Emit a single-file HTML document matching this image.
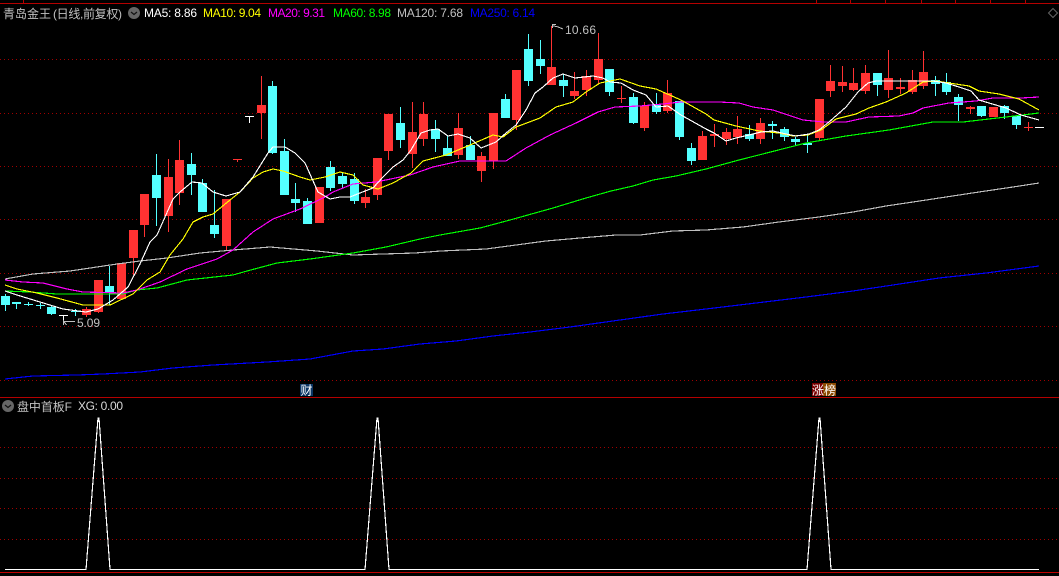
<!DOCTYPE html>
<html><head><meta charset="utf-8"><style>
html,body{margin:0;padding:0;background:#000;width:1059px;height:576px;overflow:hidden}
svg{display:block}
text{font-family:"Liberation Sans","WenQuanYi Zen Hei","Noto Sans CJK SC",sans-serif;font-size:12px}
</style></head><body>
<svg width="1059" height="576" viewBox="0 0 1059 576" xmlns="http://www.w3.org/2000/svg">
<defs><pattern id="d" x="0" y="0" width="4" height="1" patternUnits="userSpaceOnUse"><rect width="1" height="1" fill="#a00000"/></pattern></defs>
<rect width="1059" height="576" fill="#000"/>
<g shape-rendering="crispEdges">
<g fill="#000">
<rect x="0" y="59" width="1059" height="1" fill="#000"/>
</g>
<rect x="0" y="59" width="1059" height="1" fill="url(#d)"/>
<rect x="0" y="113" width="1059" height="1" fill="url(#d)"/>
<rect x="0" y="166" width="1059" height="1" fill="url(#d)"/>
<rect x="0" y="219" width="1059" height="1" fill="url(#d)"/>
<rect x="0" y="273" width="1059" height="1" fill="url(#d)"/>
<rect x="0" y="326" width="1059" height="1" fill="url(#d)"/>
<rect x="0" y="380" width="1059" height="1" fill="url(#d)"/>
<rect x="0" y="447" width="1059" height="1" fill="url(#d)"/>
<rect x="0" y="478" width="1059" height="1" fill="url(#d)"/>
<rect x="0" y="508" width="1059" height="1" fill="url(#d)"/>
<rect x="0" y="539" width="1059" height="1" fill="url(#d)"/>
<rect x="0" y="3" width="1059" height="1" fill="#b40000"/>
<rect x="0" y="397" width="1059" height="1" fill="#b40000"/>
<rect x="0" y="572" width="1059" height="1" fill="#c00000"/>
<path d="M23.5 0V3M816.5 0V3M850.5 0V3M885.5 0V3M921.5 0V3M955.5 0V3M990.5 0V3M1025.5 0V3" stroke="#b40000" fill="none"/>
<path fill="none" stroke="#54ffff" d="M5.5 294V311M16.5 302V309M28.5 302V306M40.5 303V309M51.5 305V315M75.5 309V316M109.5 266V305M156.5 154V226M191.5 153V195M202.5 179V212M214.5 190V238M272.5 81V154M284.5 139V195M295.5 183V212M307.5 198V224M330.5 161V191M342.5 172V188M354.5 173V204M400.5 107V148M435.5 120V152M447.5 136V156M470.5 136V160M505.5 94V118M528.5 34V86M540.5 40V74M563.5 74V97M609.5 69V96M633.5 93V124M656.5 93V114M679.5 101V140M691.5 143V165M749.5 125V141M772.5 121V139M784.5 127V141M795.5 137V146M807.5 135V153M877.5 73V96M935.5 76V96M946.5 73V95M958.5 94V121M981.5 106V117M1004.5 105V119M1016.5 116V129"/>
<path fill="#54ffff" d="M1 296h9V305h-9zM12 302h9V304h-9zM24 304h9V305h-9zM36 305h9V306h-9zM47 307h9V314h-9zM71 311h9V312h-9zM105 286h9V293h-9zM152 175h9V198h-9zM187 164h9V175h-9zM198 183h9V212h-9zM210 225h9V234h-9zM268 86h9V153h-9zM280 151h9V195h-9zM291 199h9V203h-9zM303 201h9V224h-9zM326 167h9V188h-9zM338 176h9V184h-9zM350 179h9V201h-9zM396 123h9V140h-9zM431 129h9V139h-9zM443 148h9V156h-9zM466 145h9V160h-9zM501 99h9V118h-9zM524 49h9V81h-9zM536 59h9V66h-9zM559 80h9V86h-9zM605 69h9V92h-9zM629 97h9V123h-9zM652 104h9V112h-9zM675 101h9V137h-9zM687 148h9V161h-9zM745 134h9V139h-9zM768 124h9V126h-9zM780 129h9V137h-9zM791 139h9V142h-9zM803 143h9V145h-9zM873 73h9V85h-9zM931 80h9V84h-9zM942 82h9V92h-9zM954 97h9V105h-9zM977 106h9V116h-9zM1000 106h9V113h-9zM1012 116h9V125h-9z"/>
<path fill="none" stroke="#ff3232" d="M86.5 307V317M98.5 280V313M121.5 263V299M133.5 230V275M144.5 194V237M168.5 159V232M179.5 140V205M226.5 199V251M237.5 159V162M261.5 76V139M319.5 187V223M365.5 189V208M377.5 158V200M388.5 114V160M412.5 102V168M423.5 102V146M458.5 113V159M481.5 152V182M493.5 113V169M516.5 70V130M551.5 26V85M574.5 72V99M586.5 70V96M598.5 33V84M621.5 86V103M644.5 102V131M667.5 80V113M702.5 131V160M714.5 124V147M726.5 128V145M737.5 116V144M760.5 118V144M819.5 99V141M830.5 65V97M842.5 66V92M853.5 68V91M865.5 65V94M888.5 50V98M900.5 78V94M912.5 70V94M923.5 51V89M970.5 106V114M993.5 107V117M1028.5 122V131"/>
<path fill="#ff3232" d="M82 309h9V315h-9zM94 280h9V312h-9zM117 263h9V299h-9zM129 230h9V258h-9zM140 194h9V225h-9zM164 177h9V216h-9zM175 160h9V193h-9zM222 199h9V246h-9zM233 159h9V160h-9zM257 105h9V113h-9zM315 187h9V223h-9zM361 197h9V203h-9zM373 158h9V195h-9zM384 114h9V151h-9zM408 132h9V154h-9zM419 114h9V139h-9zM454 128h9V155h-9zM477 156h9V171h-9zM489 113h9V161h-9zM512 70h9V120h-9zM547 67h9V85h-9zM570 91h9V96h-9zM582 76h9V90h-9zM594 59h9V80h-9zM617 98h9V99h-9zM640 106h9V128h-9zM663 93h9V111h-9zM698 136h9V160h-9zM710 134h9V136h-9zM722 132h9V139h-9zM733 129h9V137h-9zM756 123h9V139h-9zM815 99h9V138h-9zM826 81h9V91h-9zM838 82h9V86h-9zM849 83h9V90h-9zM861 73h9V91h-9zM884 78h9V90h-9zM896 87h9V89h-9zM908 80h9V92h-9zM919 72h9V86h-9zM966 107h9V109h-9zM989 107h9V117h-9zM1024 127h9V128h-9z"/>
<path fill="#fff" d="M59 315h9v1h-9zM245 116h9v1h-9zM1035 127h9v1h-9z"/>
<path fill="none" stroke="#fff" d="M63.5 315V323M249.5 116V123"/>
</g>
<g fill="none" stroke-width="1.15" shape-rendering="crispEdges">
<polyline stroke="#0000ff" points="5,379 33,376 77,375 103,374 140,372 173,368 213,365 267,362 310,359 353,351 383,349 420,344 456,341 493,336 530,332 570,327 620,320 663,314 706,309 756,303 806,297 853,291 893,285 939,278 986,273 1039,266"/>
<polyline stroke="#c0c0c0" points="5,279 33,274 70,271 117,264 140,261 167,258 200,253 233,250 270,247 317,251 353,255 383,254 415,253 441,251 463,250 486,249 516,245 546,241 580,238 616,235 640,235 673,231 706,230 743,227 779,222 819,217 853,212 886,206 913,202 946,197 979,192 1013,187 1039,183"/>
<polyline stroke="#00ff00" points="5,291 30,292 57,294 123,294 137,290 157,288 187,280 233,275 247,271 277,263 310,259 353,253 386,247 420,239 440,235 480,228 510,220 553,208 586,198 611,191 633,186 653,180 676,176 706,169 739,160 806,143 846,136 889,130 933,122 963,122 1006,117 1039,113"/>
<polyline stroke="#ff00ff" points="5,280 23,282 43,283 67,289 83,292 123,293 137,290 160,282 187,269 217,259 233,250 253,232 273,219 300,209 325,197 333,192 353,184 376,182 410,175 433,167 460,161 480,161 506,161 526,148 550,135 576,123 598,112 615,107 640,106 663,104 680,102 706,102 719,102 739,103 753,107 773,110 803,120 823,122 846,122 869,117 899,116 913,113 923,108 949,103 976,101 993,98 1021,98 1039,97"/>
<polyline stroke="#ffff00" points="5,285 17,289 37,293 57,298 83,305 110,305 133,294 147,280 160,272 170,255 183,239 193,222 203,217 213,214 230,200 240,192 253,178 263,172 273,169 283,171 300,177 310,180 325,177 340,172 353,175 363,185 378,189 393,183 411,173 423,161 446,155 470,145 493,135 503,137 516,127 540,118 556,107 573,102 586,92 600,83 620,79 640,86 656,89 681,100 706,114 714,120 736,126 759,131 779,133 793,136 808,135 821,130 836,119 856,114 869,108 886,102 906,93 923,82 936,81 949,83 969,86 979,91 999,94 1019,99 1039,110"/>
<polyline stroke="#ffffff" points="5,291 17,295 40,302 63,309 86,312 98,309 113,300 128,287 140,264 150,242 157,235 173,199 180,192 192,182 202,183 213,192 226,196 240,192 253,177 268,153 273,147 285,147 295,153 305,163 318,192 330,199 340,197 350,197 360,193 373,188 383,177 393,167 403,160 411,150 421,133 430,130 438,129 448,136 458,134 470,138 481,148 496,142 506,133 516,125 526,110 535,93 543,87 553,78 563,74 575,78 593,76 603,78 610,82 621,83 633,90 646,95 656,107 668,106 681,115 706,129 714,133 726,141 736,138 749,135 761,132 773,131 786,134 796,136 809,134 819,130 829,122 846,107 858,92 868,83 876,81 899,81 919,81 933,81 946,83 959,87 971,91 979,100 989,103 1006,108 1021,115 1039,120"/>
<polyline stroke="#ffffff" points="5,569.5 86,569.5 98,418 99,418 110,569.5 365,569.5 377,418 378,418 389,569.5 807,569.5 819,418 820,418 831,569.5 1039,569.5"/>
</g>
<g>
<circle cx="134" cy="13" r="6" fill="#666"/>
<path d="M131 12l3 2.5 3-2.5" fill="none" stroke="#111" stroke-width="1.2"/>
<circle cx="8" cy="406" r="6" fill="#666"/>
<path d="M5 405l3 2.5 3-2.5" fill="none" stroke="#111" stroke-width="1.2"/>
<path d="M1053 8.5l4.5 4.5-4.5 4.5-4.5-4.5z" fill="none" stroke="#666"/>
</g>
<text x="3" y="18" fill="#c0c0c0">青岛金王</text>
<text x="53" y="18" fill="#c0c0c0" textLength="69">(日线,前复权)</text>
<text x="144" y="17" fill="#ffffff" textLength="53">MA5: 8.86</text>
<text x="203" y="17" fill="#ffff00" textLength="58">MA10: 9.04</text>
<text x="268" y="17" fill="#ff00ff" textLength="57">MA20: 9.31</text>
<text x="333" y="17" fill="#00ff00" textLength="58">MA60: 8.98</text>
<text x="397" y="17" fill="#c0c0c0" textLength="66">MA120: 7.68</text>
<text x="470" y="17" fill="#0000ff" textLength="65">MA250: 6.14</text>
<text x="565" y="34" fill="#c0c0c0" textLength="31">10.66</text>
<text x="77" y="327" fill="#c0c0c0" textLength="23">5.09</text>
<path d="M552.5 28V24.5H556M553 26l4 .5 6 2.5" fill="none" stroke="#c0c0c0" shape-rendering="crispEdges"/>
<path d="M63 321.5H75M63.5 320V325M63.5 321l3 4" fill="none" stroke="#c0c0c0" shape-rendering="crispEdges"/>
<rect x="300" y="384" width="13" height="12" fill="#0a3564"/>
<text x="300.5" y="394.5" fill="#fff">财</text>
<rect x="812" y="383" width="11" height="13" fill="#7a0000"/>
<rect x="823" y="383" width="13" height="13" fill="#8a4a00"/>
<text x="812" y="394.5" fill="#fff">涨榜</text>
<text x="17" y="411" fill="#c0c0c0" textLength="55">盘中首板F</text>
<text x="78" y="410" fill="#d8d8d8" textLength="45">XG: 0.00</text>
</svg>
</body></html>
